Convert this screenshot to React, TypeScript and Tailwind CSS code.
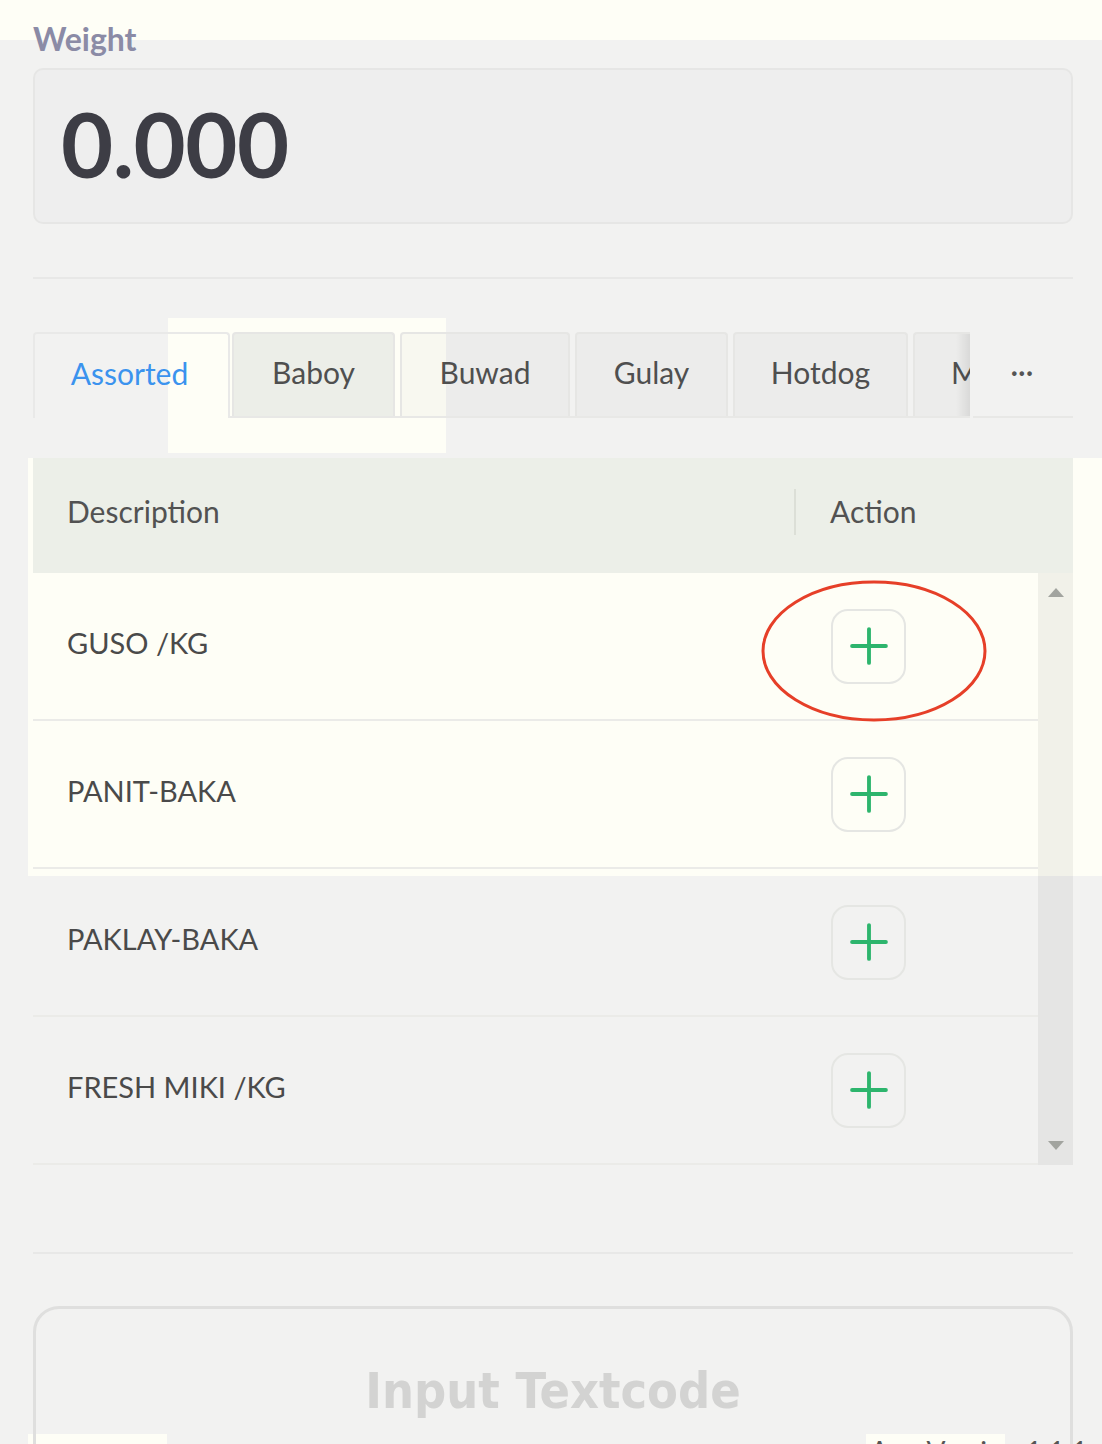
import { Plus } from "lucide-react";

const tabs = ["Baboy", "Buwad", "Gulay", "Hotdog"];
const tabWidths = ["w-[163px]", "w-[170px]", "w-[153px]", "w-[175px]"];
const items = ["GUSO /KG", "PANIT-BAKA", "PAKLAY-BAKA", "FRESH MIKI /KG"];

const App = () => {
  return (
    <div
      className="relative min-h-[1444px] w-full overflow-hidden bg-[#f2f2f1]"
      style={{ fontFamily: "Lato, 'Open Sans', sans-serif" }}
    >
      {/* light patches from the capture */}
      <div className="absolute left-0 top-0 h-[40px] w-full bg-[#fefef6]" />
      <div className="absolute left-[168px] top-[318px] h-[135px] w-[278px] bg-[#fefef6]" />
      <div className="absolute left-[28px] top-[458px] h-[418px] w-[1074px] bg-[#fefef6]" />
      <div className="absolute left-[28px] top-[1434px] h-[10px] w-[139px] bg-[#fefef6]" />
      <div className="absolute left-[866px] top-[1434px] h-[10px] w-[139px] bg-[#fefef6]" />

      <div className="relative z-10 pl-[33px] pr-[29px] pt-[20px]">
        <div className="text-[32px] font-bold leading-[38px] text-[#8b8ba6]">Weight</div>
        <div className="mt-[10px] flex h-[156px] items-center rounded-[10px] border-2 border-[#e6e6e5] bg-[#eeeeee] pb-[6px] pl-[26px]">
          <span className="text-[90px] font-bold leading-none tracking-[-0.5px] text-[#3d3d45]">0.000</span>
        </div>

        <div className="mt-[53px] h-[2px] bg-[#e8e8e7]" />

        {/* tabs */}
        <div className="mt-[53px] flex h-[86px]">
          <div className="flex w-[940px] overflow-hidden">
            <div className="flex w-[197px] shrink-0 items-center justify-center rounded-t-[4px] border-x-2 border-t-2 border-[#e9e9e8] pb-[5px] pr-[4px] text-[30px] text-[#3b93ee]">
              Assorted
            </div>
            <div className="flex gap-[5px] border-b-2 border-[#e8e8e6] pl-[2px]">
              {tabs.map((t, i) => (
                <div
                  key={t}
                  className={`flex ${tabWidths[i]} shrink-0 items-center justify-center rounded-t-[4px] border-2 border-b-0 border-[#e6e6e4] pb-[5px] text-[30px] text-[#4f4f4f] ${
                    i === 0 ? "bg-[#eceee8]" : "bg-black/[0.025]"
                  }`}
                >
                  {t}
                </div>
              ))}
              <div className="relative flex w-[57px] shrink-0 items-center overflow-hidden rounded-tl-[4px] border-l-2 border-t-2 border-[#e6e6e4] bg-black/[0.025] pb-[5px] pl-[36px] text-[30px] text-[#4f4f4f]">
                M
                <div className="absolute right-0 top-0 h-full w-[14px] bg-gradient-to-r from-transparent to-black/[0.08]" />
              </div>
            </div>
          </div>
          <div className="flex flex-1 items-center border-b-2 border-[#e8e8e6] pb-[4px] pl-[38px] text-[24px] font-bold tracking-[1px] text-[#555]">
            ···
          </div>
        </div>

        {/* table */}
        <div className="mt-[40px]">
          <div className="flex h-[115px] items-center bg-[#ecefe8] pb-[8px] text-[30px] text-[#525252]">
            <div className="flex-1 pl-[34px]">Description</div>
            <div className="h-[46px] w-[2px] bg-[#dcdfd7]" />
            <div className="w-[277px] pl-[34px]">Action</div>
          </div>
          <div className="flex">
            <div className="flex-1">
              {items.map((it) => (
                <div key={it} className="flex h-[148px] items-center border-b-2 border-[#ebebe8]">
                  <div className="flex-1 pb-[6px] pl-[34px] text-[29px] text-[#4a4a4a]">{it}</div>
                  <div className="w-[242px] pl-[35px]">
                    <button className="flex h-[75px] w-[75px] items-center justify-center rounded-[17px] border-2 border-[#e5e6e3]">
                      <Plus size={58} strokeWidth={1.6} className="text-[#2db56d]" />
                    </button>
                  </div>
                </div>
              ))}
            </div>
            <div className="flex w-[35px] flex-col items-center justify-between bg-black/[0.05] py-[15px]">
              <svg width="16" height="9" viewBox="0 0 16 9">
                <path d="M8 0L16 9H0Z" fill="#a2a49f" />
              </svg>
              <svg width="16" height="9" viewBox="0 0 16 9">
                <path d="M0 0H16L8 9Z" fill="#a2a49f" />
              </svg>
            </div>
          </div>
        </div>

        <div className="mt-[87px] h-[2px] bg-[#e8e8e7]" />

        <div className="mt-[52px] flex h-[200px] justify-center rounded-[26px] border-[3px] border-[#dfdfde] pt-[47px]">
          <span
            className="text-[50px] font-bold leading-[70px] text-[#d3d3d2]"
            style={{ fontFamily: "'Liberation Sans Narrow', 'DejaVu Sans Condensed', sans-serif" }}
          >
            Input Textcode
          </span>
        </div>
      </div>

      <div className="absolute left-[870px] top-[1436px] z-20 text-[28px] leading-[30px] text-[#555]">
        App Version 1.1.1
      </div>

      {/* annotation */}
      <svg className="absolute left-[758px] top-[578px] z-30" width="232" height="146" viewBox="0 0 232 146">
        <ellipse cx="116" cy="73" rx="111" ry="69" fill="none" stroke="#e63f28" strokeWidth="3" />
      </svg>
    </div>
  );
};

export default App;
